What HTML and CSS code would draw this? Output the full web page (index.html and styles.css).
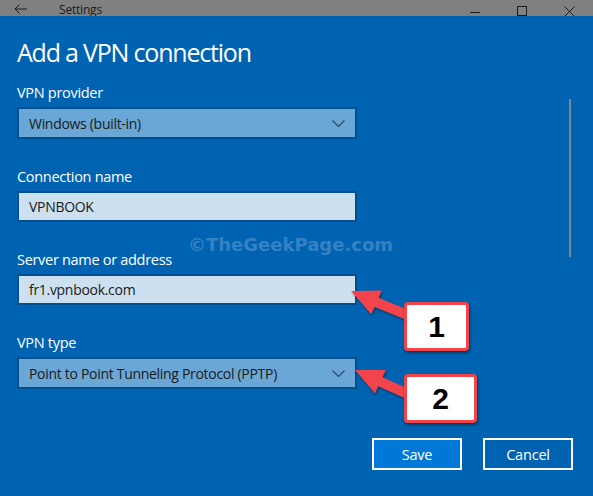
FILE: index.html
```html
<!DOCTYPE html>
<html lang="en">
<head>
    <meta charset="UTF-8">
    <meta name="viewport" content="width=device-width, initial-scale=1.0">
    <title>Add a VPN connection</title>
    <link rel="stylesheet" href="styles.css">
</head>
<body>
    <div class="titlebar">
        <div class="titlebar-left">
            <svg class="back" width="14" height="10" viewBox="0 0 14 10"><path d="M13 5H1M5.5 0.5L1 5l4.5 4.5" fill="none" stroke="#1a1a1a" stroke-width="1"/></svg>
            <span class="app-name">Settings</span>
        </div>
        <div class="window-btns">
            <svg width="11" height="11" viewBox="0 0 11 11"><path d="M0 6.5h10" stroke="#1a1a1a" stroke-width="1"/></svg>
            <svg width="11" height="11" viewBox="0 0 11 11"><rect x="0.5" y="0.5" width="9" height="9" fill="none" stroke="#1a1a1a" stroke-width="1"/></svg>
            <svg width="11" height="11" viewBox="0 0 11 11"><path d="M0.5 0.5l10 10M10.5 0.5l-10 10" stroke="#1a1a1a" stroke-width="1"/></svg>
        </div>
    </div>

    <div class="page">
        <h1>Add a VPN connection</h1>

        <div class="field">
            <label>VPN provider</label>
            <div class="select">
                <span>Windows (built-in)</span>
                <svg class="chevron" width="13" height="7" viewBox="0 0 13 7"><path d="M0.5 0.5l6 6 6-6" fill="none" stroke="#2c4a68" stroke-width="1.2"/></svg>
            </div>
        </div>

        <div class="field">
            <label>Connection name</label>
            <div class="textbox">VPNBOOK</div>
        </div>

        <div class="field">
            <label>Server name or address</label>
            <div class="textbox">fr1.vpnbook.com</div>
        </div>

        <div class="field">
            <label>VPN type</label>
            <div class="select">
                <span>Point to Point Tunneling Protocol (PPTP)</span>
                <svg class="chevron" width="13" height="7" viewBox="0 0 13 7"><path d="M0.5 0.5l6 6 6-6" fill="none" stroke="#2c4a68" stroke-width="1.2"/></svg>
            </div>
        </div>

        <div class="actions">
            <button class="btn primary">Save</button>
            <button class="btn">Cancel</button>
        </div>
    </div>

    <div class="scroll-thumb"></div>
    <div class="watermark">&copy;TheGeekPage.com</div>

    <!-- callout arrows -->
    <svg class="arrows" width="593" height="496" viewBox="0 0 593 496">
        <polygon class="arrow" points="351,291 381.9,290.5 378.6,297.8 412,311.4 408,320.6 374.6,307 371.3,314.3"/>
        <polygon class="arrow" points="355,370 385.9,369.9 382.5,377.2 412.1,390.5 407.9,399.5 378.3,386.2 375,393.5"/>
    </svg>
    <div class="callout one">1</div>
    <div class="callout two">2</div>
</body>
</html>
```

FILE: styles.css
```css
body {
    margin: 0;
    width: 593px;
    height: 496px;
    overflow: hidden;
    background: #0063b1;
    font-family: "Open Sans", "Noto Sans", sans-serif;
    color: #fff;
    position: relative;
}
.titlebar {
    height: 16px;
    background: #808080;
    display: flex;
    justify-content: space-between;
    align-items: flex-end;
    overflow: hidden;
    color: #1a1a1a;
}
.titlebar-left {
    display: flex;
    align-items: flex-end;
}
.back {
    margin: 0 0 2px 14px;
}
.app-name {
    font-size: 12px;
    line-height: 14px;
    margin-left: 31px;
    letter-spacing: -0.2px;
    position: relative;
    top: 1px;
}
.window-btns {
    display: flex;
    gap: 36px;
    margin-right: 18px;
    position: relative;
    top: 1px;
}
.page {
    padding: 0 0 0 17px;
}
h1 {
    font-size: 25px;
    font-weight: 400;
    line-height: 34px;
    margin: 19px 0 14px;
    letter-spacing: -1.2px;
}
.field {
    width: 340px;
    margin-bottom: 28px;
}
.field label {
    display: block;
    font-size: 14.5px;
    line-height: 20px;
    margin-bottom: 4px;
    letter-spacing: -0.3px;
}
.select,
.textbox {
    box-sizing: border-box;
    height: 32px;
    border: 2px solid #004f8f;
    padding: 0 10px;
    font-size: 14px;
    letter-spacing: -0.3px;
    color: #1a1a1a;
    display: flex;
    align-items: center;
    justify-content: space-between;
}
.select {
    background: #6aa7d6;
}
.textbox {
    background: #cce0f0;
    height: 31px;
}
.actions {
    display: flex;
    justify-content: flex-end;
    gap: 21px;
    margin: 49px 20px 0 0;
}
.btn {
    width: 90px;
    height: 32px;
    border: 2px solid #fff;
    background: #0063b1;
    color: #fff;
    font-family: inherit;
    font-size: 14.5px;
    letter-spacing: -0.2px;
    padding: 0;
}
.btn.primary {
    background: #0078d7;
}
.scroll-thumb {
    position: absolute;
    left: 569px;
    top: 99px;
    width: 2px;
    height: 158px;
    background: #7b8794;
}
.watermark {
    position: absolute;
    left: 188px;
    top: 234px;
    font-family: "DejaVu Sans", sans-serif;
    font-weight: bold;
    font-size: 18px;
    color: rgba(120, 170, 220, 0.45);
}
.arrows {
    position: absolute;
    left: 0;
    top: 0;
}
.arrow {
    fill: #f2444a;
    filter: drop-shadow(1px 2px 1px rgba(0, 0, 0, 0.35));
}
.callout {
    position: absolute;
    box-sizing: border-box;
    background: #fff;
    border: 3px solid #f2444a;
    border-radius: 4px;
    box-shadow: 1px 2px 3px rgba(0, 0, 0, 0.45);
    color: #000;
    font-family: "Liberation Sans", Arial, sans-serif;
    font-weight: bold;
    font-size: 30px;
    display: flex;
    align-items: center;
    justify-content: center;
}
.callout.one {
    left: 404px;
    top: 302px;
    width: 65px;
    height: 49px;
}
.callout.two {
    left: 404px;
    top: 374px;
    width: 73px;
    height: 49px;
}
```
